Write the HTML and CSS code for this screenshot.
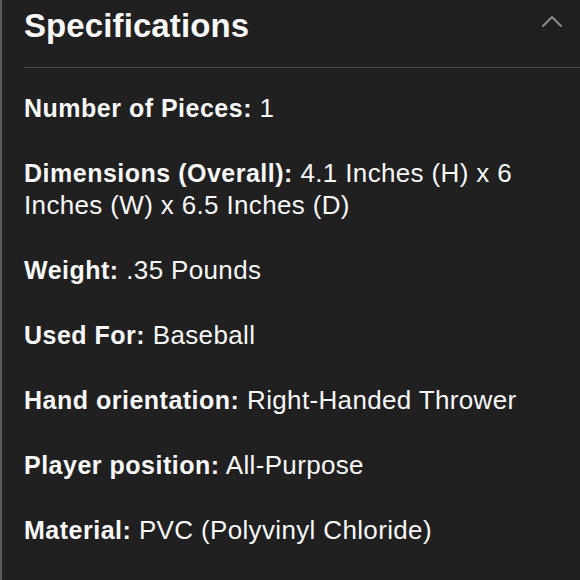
FILE: index.html
```html
<!DOCTYPE html>
<html lang="en">
<head>
<meta charset="utf-8">
<title>Specifications</title>
<link rel="stylesheet" href="styles.css">
</head>
<body>
<section class="panel">
  <header class="panel-head">
    <h2 class="panel-title">Specifications</h2>
    <svg class="chevron" width="22" height="14" viewBox="0 0 22 14" aria-hidden="true">
      <polyline points="2,12 11,3 20,12" fill="none" stroke="#8c8c8c" stroke-width="2" stroke-linecap="round" stroke-linejoin="round"/>
    </svg>
  </header>
  <div class="specs">
    <p class="spec"><b>Number of Pieces:</b> 1</p>
    <p class="spec"><b>Dimensions (Overall):</b> 4.1 Inches (H) x 6 Inches (W) x 6.5 Inches (D)</p>
    <p class="spec"><b>Weight:</b> .35 Pounds</p>
    <p class="spec"><b>Used For:</b> Baseball</p>
    <p class="spec"><b>Hand orientation:</b> Right-Handed Thrower</p>
    <p class="spec"><b>Player position:</b> All-Purpose</p>
    <p class="spec"><b>Material:</b> PVC (Polyvinyl Chloride)</p>
  </div>
</section>
</body>
</html>
```
FILE: styles.css
```css
html, body {
  margin: 0;
  padding: 0;
  background: #202020;
}
body {
  min-height: 580px;
  border-left: 2px solid #5a5a5a;
  box-sizing: border-box;
  font-family: "Liberation Sans", Arial, sans-serif;
  color: #f7f7f7;
}
.panel {
  padding-left: 22px;
}
.panel-head {
  display: flex;
  align-items: flex-start;
  justify-content: space-between;
  padding-top: 6px;
  height: 61px;
  border-bottom: 1px solid #474747;
}
.panel-title {
  margin: 0;
  font-size: 33px;
  line-height: 40px;
  font-weight: bold;
  letter-spacing: 0.1px;
}
.chevron {
  margin-top: 8px;
  margin-right: 17px;
}
.specs {
  padding-top: 24px;
  padding-right: 30px;
}
.spec {
  margin: 0 0 33px 0;
  font-size: 26px;
  line-height: 32px;
  letter-spacing: 0.35px;
}
.spec b {
  font-size: 25px;
  font-weight: bold;
  letter-spacing: 0.5px;
}
```
